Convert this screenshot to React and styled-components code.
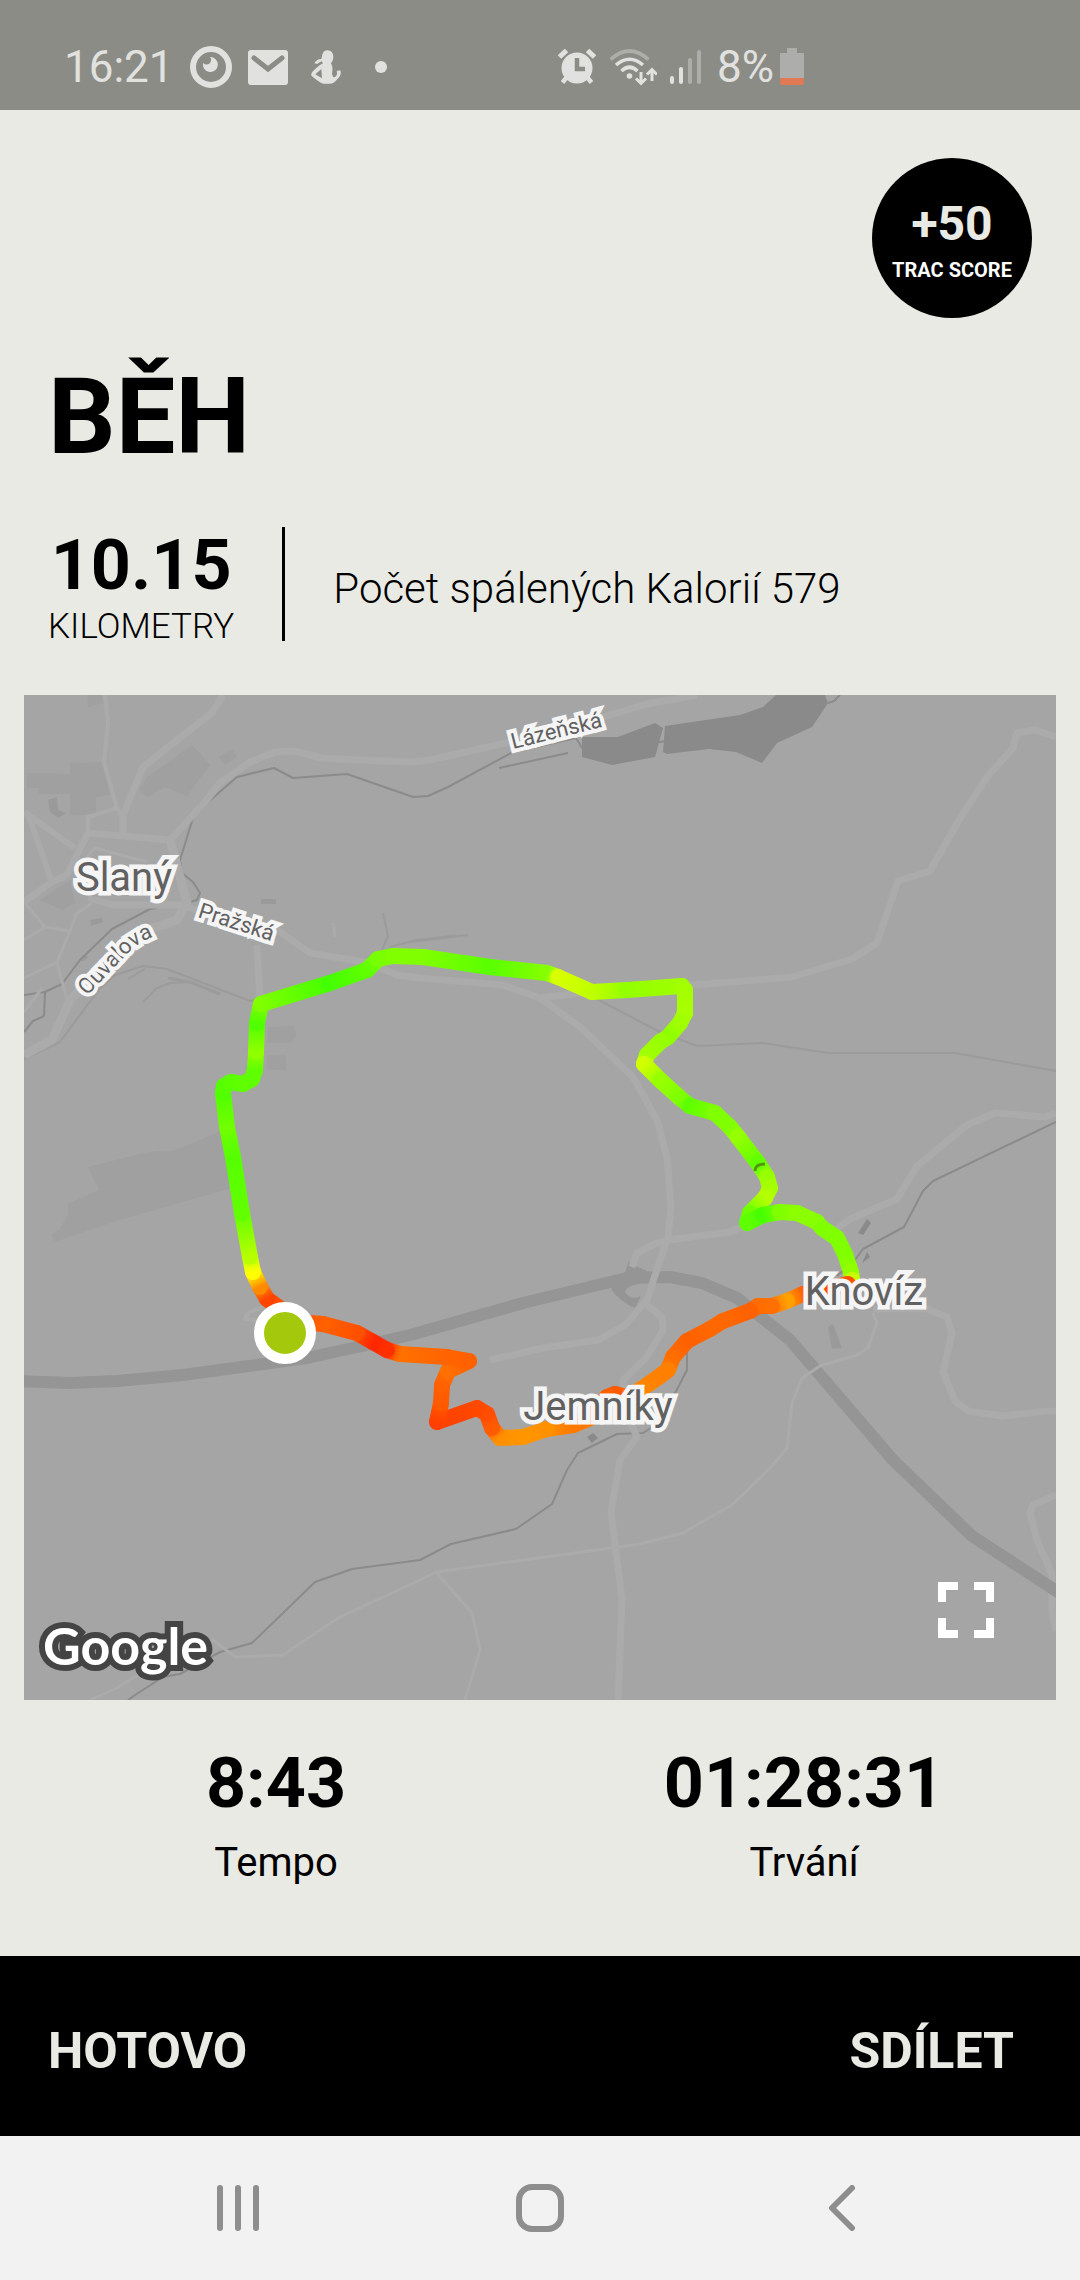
import React from "react";
import styled, { createGlobalStyle } from "styled-components";

const GlobalStyle = createGlobalStyle`
  * { box-sizing: border-box; }
  body { margin: 0; background: #e9eae4; font-family: Roboto, "Liberation Sans", sans-serif; color: #000; }
  button { border: 0; padding: 0; background: none; font: inherit; color: inherit; cursor: pointer; }
  svg { display: block; }
`;

const Screen = styled.div`
  display: flex;
  flex-direction: column;
  min-height: 100vh;
`;

const StatusBar = styled.header`
  display: grid;
  grid-template-columns: 1fr 1fr;
  align-items: center;
  height: 110px;
  padding-top: 24px;
  background: #8b8c86;
  color: #e1e1df;
  font-size: 44px;
  line-height: 48px;
`;

const StatusGroup = styled.div`
  display: flex;
  align-items: center;
  gap: ${(p) => p.$gap}px;
  padding-left: ${(p) => p.$inset}px;
`;

const Summary = styled.main`
  display: flex;
  flex-direction: column;
  flex: 1;
`;

const ScoreRow = styled.div`
  display: flex;
  justify-content: flex-end;
  padding: 48px 48px 0;
`;

const ScoreBadge = styled.div`
  display: flex;
  flex-direction: column;
  align-items: center;
  width: 160px;
  height: 160px;
  padding-top: 38px;
  border-radius: 50%;
  background: #000;
  font-weight: 700;
`;

const ScoreValue = styled.span`
  color: #e9eae4;
  font-size: 48px;
  line-height: 56px;
`;

const ScoreLabel = styled.span`
  color: #fff;
  font-size: 20px;
  line-height: 36px;
  white-space: nowrap;
`;

const Title = styled.h1`
  margin: 0;
  padding: 39px 48px 50px;
  font-size: 106px;
  font-weight: 700;
  line-height: 120px;
`;

const Overview = styled.section`
  display: flex;
  align-items: center;
  gap: 48px;
  padding: 0 48px 44px;
`;

const Metric = styled.div`
  display: flex;
  flex-direction: column;
  align-items: center;
  gap: ${(p) => p.$gap || 0}px;
`;

const MetricValue = styled.span`
  font-size: 70px;
  font-weight: 700;
  line-height: 76px;
`;

const MetricLabel = styled.span`
  font-size: ${(p) => (p.$small ? 35 : 40)}px;
  font-weight: ${(p) => (p.$small ? 300 : 400)};
  line-height: 48px;
`;

const Divider = styled.div`
  align-self: flex-start;
  width: 3px;
  height: 114px;
  background: #000;
`;

const Calories = styled.p`
  margin: 0;
  font-size: 42px;
  font-weight: 300;
  line-height: 48px;
`;

const MapCard = styled.section`
  position: relative;
  margin: 0 24px;
  background: #a5a5a5;
`;

const MapDrawing = styled.svg`
  width: 100%;
  height: auto;
  fill: none;
  stroke-linejoin: round;

  text {
    font-family: Roboto, "Liberation Sans", sans-serif;
    fill: #616161;
    stroke: #f5f5f5;
    stroke-linejoin: miter;
    paint-order: stroke;
  }
`;

const TownLabel = styled.text`
  font-size: 40px;
  stroke-width: 9px;
  text-anchor: middle;
`;

const StreetLabel = styled.text`
  font-size: 22px;
  stroke-width: 8px;
`;

const Brand = styled.text`
  && {
    font-family: Lato, sans-serif;
    font-size: 52px;
    font-weight: 700;
    fill: #fff;
    stroke: #444;
    stroke-width: 12px;
  }
`;

const ExpandButton = styled.button`
  position: absolute;
  right: 62px;
  bottom: 62px;
`;

const Metrics = styled.section`
  display: grid;
  grid-template-columns: 1fr 1fr;
  padding: 45px 12px 69px;
`;

const Actions = styled.footer`
  display: flex;
  align-items: center;
  justify-content: space-between;
  height: 180px;
  padding: 10px 66px 0 48px;
  background: #000;
  color: #e9eae4;
`;

const ActionButton = styled.button`
  && {
    font-size: 50px;
    font-weight: 700;
    line-height: 60px;
  }
`;

const SystemNav = styled.nav`
  display: flex;
  align-items: center;
  justify-content: space-around;
  height: 144px;
  padding: 0 87px;
  background: #f2f2f2;
`;

const NavButton = styled.button`
  display: flex;
  align-items: center;
  justify-content: center;
  width: 96px;
  height: 96px;
`;

const ROADS = [
  [7, "223,695 212,713 177,740 143,767 123,815 123,833"],
  [7, "697,695 647,704 603,717 510,742 430,760 413,762 380,761 322,758 293,751 275,752 250,762 220,783 205,802 170,840 88,833 67,875 52,882 24,902"],
  [9, "170,840 187,903 177,920 153,928 125,940 100,968 70,1000 52,1040 24,1055"],
  [7, "88,898 113,905 180,905 197,910 277,930 310,953 370,963 397,975 420,978 503,985 540,998 580,1027 633,1077 657,1120 667,1157 671,1207 668,1237 660,1260 647,1300 625,1325 598,1340 543,1348 490,1360"],
  [7, "742,1227 730,1232 668,1240 657,1243 637,1253 632,1267"],
  [7, "647,1305 662,1317 663,1330 647,1357 623,1380 625,1410 637,1437 620,1460 611,1512 622,1599 618,1700"],
  [7, "540,998 590,992 693,985 792,977 852,959 877,943 898,881 930,871 962,815 987,777 1013,748 1017,733 1035,730 1056,737"],
  [7, "1056,1113 1045,1117 995,1113 967,1125 917,1166 897,1199 850,1219 837,1229"],
  [7, "873,1309 927,1309 947,1317 952,1333 943,1372 955,1401 968,1411 1002,1416 1048,1411 1056,1411"],
  [3, "873,1313 877,1323 868,1348 857,1355 820,1366 802,1378 792,1403 787,1448 772,1466 732,1505 700,1523 683,1533 640,1544 560,1555 436,1572 420,1580 340,1617 283,1655 235,1657 213,1640 138,1675 117,1688 90,1700"],
  [3, "436,1572 472,1613 480,1650 465,1700"],
  [4, "105,695 108,723 104,763 117,808 123,820"],
  [4, "117,808 88,817 88,833"],
  [6, "24,812 75,848"],
  [6, "29,817 52,882"],
  [3, "25,903 45,927 70,931"],
  [3, "24,940 45,927"],
  [3, "92,903 77,913 70,931 57,962 67,1000"],
  [3, "24,978 57,962"],
  [3, "24,1012 42,988"],
  [3, "87,857 95,848 147,862"],
  [7, "257,945 260,1000"],
  [3, "333,923 335,937"],
  [4, "275,1302 248,1313 245,1319 262,1321"],
];

const UNDERPASS = "1056,1495 1033,1505 1030,1513 1037,1540 1052,1574 1052,1611 1056,1631";

const MINOR_TRACKS = [
  [2, "595,998 660,1032 697,1046 763,1043 828,1053 955,1053 1056,1071"],
  [2, "24,1059 60,1042 100,988 115,975 143,966 167,969 250,1001 262,999"],
  [2, "143,1002 157,988 170,983 190,982"],
  [3, "168,978 190,982 220,994"],
  [2, "128,979 145,969"],
  [2, "383,913 388,936 382,950"],
  [2, "390,947 413,941 468,935"],
  [3, "413,941 455,936"],
];

const RAILS = [
  "157,908 150,909 112,929 80,960 62,984 45,992 24,995",
  "45,992 44,1016 33,1021 24,1032",
  "190,902 197,900 200,893 193,882 182,873 180,860 193,818 207,803 237,777 274,768 293,778 347,774 413,797 428,796 448,787 513,752 576,738 582,748",
  "499,768 568,753",
  "655,743 665,741",
  "828,703 834,701 840,695",
  "1056,1122 933,1181 923,1191 904,1227 863,1249 855,1260 837,1276",
  "687,1345 687,1370 670,1403 660,1422 643,1433 617,1434 578,1453 567,1470 552,1504 516,1529 451,1544 420,1560 352,1569 315,1582 252,1643 220,1652 180,1674 163,1677 135,1695 128,1700",
];

const LAND = [
  "88,1167 143,1153 157,1151 172,1151 193,1143 220,1131 231,1188 110,1223 55,1242 51,1235 60,1229 68,1215 68,1204 99,1190",
  "27,773 70,774 70,763 103,762 110,795 96,797 96,813 82,815 70,815 70,794 39,794 39,788 27,788",
  "139,790 147,777 192,745 210,765 200,778 187,796 165,787 148,797",
  "219,757 232,749 237,757 225,765",
  "40,900 70,880 75,903 62,910",
  "87,695 102,695 103,703 88,707",
  "267,1027 293,1026 297,1035 290,1043 267,1043",
  "267,1055 286,1055 286,1070 267,1070",
];

const BLOCKS = [
  "48,800 57,797 58,810 66,813 58,818 50,812",
  "90,920 102,918 103,922 91,926",
  "261,899 276,899 276,904 261,904",
  "828,1327 833,1324 842,1348 832,1349",
  "80,958 86,955 88,958 82,962",
];

const WATER = [
  "582,737 618,737 655,723 663,728 655,757 612,765 582,757",
  "665,726 740,715 763,707 776,695 825,695 828,703 812,727 777,743 762,763 736,752 709,749 667,754 663,752",
  "858,1233 867,1219 871,1223 863,1235",
  "862,1263 867,1252 870,1257",
  "587,1437 593,1433 598,1438 592,1443",
];

const ROUTE = [
  [285, 1333, "#ff5a00"], [285, 1312, "#ff5a00"], [267, 1299, "#ff4400"], [260, 1287, "#ff8a00"],
  [253, 1272, "#ffff00"], [250, 1257, "#b8ff00"], [242, 1213, "#62ff00"], [233, 1157, "#56ff00"],
  [227, 1127, "#70ff00"], [223, 1093, "#50ff00"], [224, 1086, "#55ff00"], [231, 1082, "#5cff00"],
  [243, 1084, "#60ff00"], [252, 1079, "#60ff00"], [255, 1070, "#60ff00"], [256, 1052, "#90ff00"],
  [257, 1023, "#50ff00"], [261, 1004, "#80ff00"], [330, 983, "#44ff00"], [367, 970, "#60ff00"],
  [378, 959, "#78ff00"], [393, 956, "#80ff00"], [423, 957, "#80ff00"], [490, 967, "#5aff00"],
  [547, 973, "#86ff00"], [558, 977, "#d8ff00"], [592, 992, "#c0ff00"], [627, 990, "#94ff00"],
  [682, 986, "#a0ff00"], [685, 990, "#a4ff00"], [685, 1013, "#a8ff00"], [680, 1023, "#a0ff00"],
  [668, 1037, "#90ff00"], [660, 1042, "#98ff00"], [647, 1055, "#a0ff00"], [644, 1064, "#d0ff00"],
  [660, 1080, "#98ff00"], [680, 1098, "#80ff00"], [690, 1106, "#60ff00"], [715, 1113, "#80ff00"],
  [730, 1127, "#80ff00"], [738, 1137, "#96ff00"], [758, 1163, "#62ff00"], [767, 1177, "#98ff00"],
  [770, 1188, "#a4ff00"], [765, 1198, "#b4ff00"], [750, 1213, "#70ff00"], [747, 1223, "#60ff00"],
  [763, 1215, "#48ff00"], [780, 1212, "#80ff00"], [797, 1213, "#8cff00"], [817, 1222, "#88ff00"],
  [822, 1228, "#80ff00"], [837, 1238, "#80ff00"], [845, 1254, "#80ff00"], [851, 1272, "#90ff00"],
  [852, 1280, "#c8ff00"], [848, 1284, "#ff5000"], [823, 1291, "#ff5000"], [803, 1294, "#ff6400"],
  [787, 1301, "#ffa000"], [772, 1306, "#ff7000"], [758, 1306, "#ff6c00"], [750, 1311, "#ff6000"],
  [723, 1321, "#ff6800"], [710, 1329, "#ff6800"], [687, 1341, "#ff6000"], [673, 1357, "#ff6c00"],
  [668, 1370, "#ff8000"], [660, 1376, "#ff8000"], [643, 1388, "#ff8400"], [627, 1397, "#ff7000"],
  [615, 1394, "#ff5a00"], [607, 1397, "#ff6000"], [590, 1418, "#ff7a00"], [573, 1425, "#ff7800"],
  [547, 1429, "#ff9000"], [523, 1437, "#ff9600"], [500, 1438, "#ff9000"], [492, 1428, "#ff5c00"],
  [487, 1414, "#ff4e00"], [477, 1408, "#ff4800"], [437, 1422, "#ff4000"], [441, 1403, "#ff5a00"],
  [442, 1385, "#ff6000"], [448, 1371, "#ff7000"], [469, 1361, "#ff6000"], [447, 1357, "#ff6400"],
  [400, 1354, "#ff7000"], [387, 1350, "#ff3000"], [373, 1342, "#ff2800"], [357, 1333, "#ff5000"],
  [323, 1324, "#ff6000"], [310, 1323, "#ff5a00"], [285, 1333, "#ff5a00"],
];

const SEGMENTS = ROUTE.slice(1).map((to, i) => ({ id: `pace-${i}`, from: ROUTE[i], to }));

function RouteMap() {
  return (
    <MapDrawing viewBox="24 695 1032 1005" role="img" aria-label="Mapa trasy">
      <defs>
        <path id="ouvalova" d="M87 996 L128 953 Q134 946 146 940 L166 931" />
        {SEGMENTS.map(({ id, from, to }) => (
          <linearGradient key={id} id={id} gradientUnits="userSpaceOnUse" x1={from[0]} y1={from[1]} x2={to[0]} y2={to[1]}>
            <stop offset="0" stopColor={from[2]} />
            <stop offset="1" stopColor={to[2]} />
          </linearGradient>
        ))}
      </defs>
      <g fill="#a0a0a0">{LAND.map((p) => <polygon key={p} points={p} />)}</g>
      <g fill="#9a9a9a">{BLOCKS.map((p) => <polygon key={p} points={p} />)}</g>
      <g stroke="#9b9b9b">{MINOR_TRACKS.map(([w, p]) => <polyline key={p} points={p} strokeWidth={w} />)}</g>
      <g stroke="#8b8b8b" strokeWidth="2">{RAILS.map((p) => <polyline key={p} points={p} />)}</g>
      <g fill="#8a8a8a">{WATER.map((p) => <polygon key={p} points={p} />)}</g>
      <polyline points={UNDERPASS} stroke="#ababab" strokeWidth="7" />
      <g fill="#959595">
        <path d="M629 1261 L625 1272 L611 1289 Q620 1302 635 1308 L641 1296 Q631 1301 625 1292 Q627 1285 640 1284 L647 1271 L636 1266 Z" />
      </g>
      <polyline
        stroke="#959595"
        strokeWidth="12"
        points="18,1381 70,1383 117,1381 183,1375 307,1358 380,1342 410,1335 527,1302 627,1278 670,1277 702,1283 737,1298 790,1340 893,1460 972,1536 1064,1596"
      />
      <g stroke="#ababab">{ROADS.map(([w, p]) => <polyline key={p} points={p} strokeWidth={w} />)}</g>
      <g strokeWidth="16" strokeLinecap="round">
        {SEGMENTS.map(({ id, from, to }) => (
          <line key={id} x1={from[0]} y1={from[1]} x2={to[0]} y2={to[1]} stroke={`url(#${id})`} />
        ))}
      </g>
      <path d="M755 1171 Q755 1164 765 1164" stroke="#4f9a0c" strokeWidth="3" />
      <circle cx="285" cy="1333" r="26" fill="#a4c90c" stroke="#fff" strokeWidth="10" />
      <TownLabel x="124" y="891">Slaný</TownLabel>
      <TownLabel x="598" y="1420">Jemníky</TownLabel>
      <TownLabel x="864" y="1305">Knovíz</TownLabel>
      <StreetLabel transform="translate(513 749) rotate(-14)">Lázeňská</StreetLabel>
      <StreetLabel transform="translate(197 917) rotate(18)">Pražská</StreetLabel>
      <StreetLabel><textPath href="#ouvalova">Ouvalova</textPath></StreetLabel>
      <Brand x="43" y="1665">Google</Brand>
    </MapDrawing>
  );
}

const EyeIcon = () => (
  <svg width="42" height="42" viewBox="0 0 42 42">
    <circle cx="21" cy="21" r="18" fill="none" stroke="currentColor" strokeWidth="6" />
    <path d="M20 11 A7.5 7.5 0 1 1 13 17 A4 4 0 0 0 20 11Z" fill="currentColor" />
  </svg>
);

const MailIcon = () => (
  <svg width="40" height="35" viewBox="0 0 40 35">
    <rect width="40" height="35" rx="3" fill="currentColor" />
    <path d="M6 8 L20 19 L34 8" fill="none" stroke="#8b8c86" strokeWidth="5" strokeLinecap="round" />
  </svg>
);

const AthleteIcon = () => (
  <svg width="32" height="34" viewBox="810 91 94 102" fill="currentColor">
    <path d="M861 92 C873 92 880 102 879 113 C879 121 875 126 872 131 C878 141 877 151 875 162 C876 168 879 172 881 173 C889 170 892 164 889 154 L900 152 C904 165 898 172 892 177 C884 188 876 192 868 192 L848 192 C836 187 824 176 813 168 C812 157 820 153 828 145 C836 138 840 136 848 131 C843 125 843 117 845 109 C847 98 852 92 861 92Z" />
    <path d="M822 131 C829 119 838 117 848 119 C844 129 834 128 831 133Z" />
    <path d="M825 164 L843 148 L845 176Z" fill="#8b8c86" />
  </svg>
);

const DotIcon = () => (
  <svg width="12" height="12" viewBox="0 0 12 12"><circle cx="6" cy="6" r="6" fill="currentColor" /></svg>
);

const AlarmIcon = () => (
  <svg width="38" height="36" viewBox="0 0 38 36" fill="none" stroke="currentColor">
    <circle cx="19" cy="19" r="15.5" fill="currentColor" stroke="none" />
    <path d="M1.5 8 L8.5 1.5 M29.5 1.5 L36.5 8" strokeWidth="5" />
    <path d="M9 28 L4.500 33.500 M29 28 L33.500 33.500" strokeWidth="4.500" />
    <path d="M19 9 V20 H27" stroke="#8b8c86" strokeWidth="4.500" />
  </svg>
);

const WifiIcon = () => (
  <svg width="48" height="37" viewBox="0 0 48 37" fill="none" stroke="currentColor" strokeWidth="3.600">
    <path d="M1.500 10.500 Q20.500 -6.500 39.500 10.500" opacity="0.4" />
    <path d="M7 16 Q20.500 4.500 34 16 M12.500 22 Q20.500 14.500 28.500 22" />
    <circle cx="20.500" cy="27" r="2.800" fill="currentColor" stroke="none" />
    <path d="M32 23 V34 M27 29.500 L32 34.500 L37 29.500 M43 32 V21 M38 25.500 L43 20.500 L48 25.500" strokeWidth="3" />
  </svg>
);

const SignalIcon = () => (
  <svg width="32" height="36" viewBox="0 0 32 36" fill="currentColor">
    <rect y="27" width="4" height="8" rx="2" />
    <rect x="9" y="18" width="4" height="17" rx="2" />
    <rect x="18" y="9" width="4" height="26" rx="2" opacity="0.4" />
    <rect x="27" y="1" width="4" height="34" rx="2" opacity="0.4" />
  </svg>
);

const BatteryIcon = () => (
  <svg width="24" height="38" viewBox="0 0 24 38">
    <path d="M7 0 H17 V5 H23 Q24 5 24 6 V31 H0 V6 Q0 5 1 5 H7Z" fill="#adadab" />
    <path d="M0 30 H24 V35 Q24 37 22 37 H2 Q0 37 0 35Z" fill="#e07a55" />
  </svg>
);

export default function App() {
  return (
    <Screen>
      <GlobalStyle />
      <StatusBar>
        <StatusGroup $gap={16} $inset={64}>
          <span>16:21</span>
          <EyeIcon />
          <MailIcon />
          <StatusGroup $gap={33} $inset={6}>
            <AthleteIcon />
            <DotIcon />
          </StatusGroup>
        </StatusGroup>
        <StatusGroup $gap={13} $inset={18}>
          <AlarmIcon />
          <WifiIcon />
          <SignalIcon />
          <StatusGroup $gap={6} $inset={2}>
            <span>8%</span>
            <BatteryIcon />
          </StatusGroup>
        </StatusGroup>
      </StatusBar>
      <Summary>
        <ScoreRow>
          <ScoreBadge>
            <ScoreValue>+50</ScoreValue>
            <ScoreLabel>TRAC SCORE</ScoreLabel>
          </ScoreBadge>
        </ScoreRow>
        <Title>BĚH</Title>
        <Overview>
          <Metric>
            <MetricValue>10.15</MetricValue>
            <MetricLabel $small>KILOMETRY</MetricLabel>
          </Metric>
          <Divider />
          <Calories>Počet spálených Kalorií 579</Calories>
        </Overview>
        <MapCard>
          <RouteMap />
          <ExpandButton aria-label="Celá obrazovka">
            <svg width="56" height="56" viewBox="0 0 56 56" fill="none" stroke="#fff" strokeWidth="8">
              <path d="M20 4 H4 V20 M36 4 H52 V20 M4 36 V52 H20 M36 52 H52 V36" />
            </svg>
          </ExpandButton>
        </MapCard>
        <Metrics>
          <Metric $gap={18}>
            <MetricValue>8:43</MetricValue>
            <MetricLabel>Tempo</MetricLabel>
          </Metric>
          <Metric $gap={18}>
            <MetricValue>01:28:31</MetricValue>
            <MetricLabel>Trvání</MetricLabel>
          </Metric>
        </Metrics>
      </Summary>
      <Actions>
        <ActionButton>HOTOVO</ActionButton>
        <ActionButton>SDÍLET</ActionButton>
      </Actions>
      <SystemNav>
        <NavButton aria-label="Poslední aplikace">
          <svg width="44" height="46" viewBox="0 0 44 46" stroke="#8e8e8e" strokeWidth="6" strokeLinecap="round">
            <path d="M4 3 V43 M22 3 V43 M40 3 V43" />
          </svg>
        </NavButton>
        <NavButton aria-label="Domů">
          <svg width="48" height="48" viewBox="0 0 48 48" fill="none" stroke="#8e8e8e" strokeWidth="6">
            <rect x="3" y="3" width="42" height="42" rx="13" />
          </svg>
        </NavButton>
        <NavButton aria-label="Zpět">
          <svg width="28" height="46" viewBox="0 0 28 46" fill="none" stroke="#8e8e8e" strokeWidth="6" strokeLinecap="round" strokeLinejoin="round">
            <path d="M24 3 L4 23 L24 43" />
          </svg>
        </NavButton>
      </SystemNav>
    </Screen>
  );
}
